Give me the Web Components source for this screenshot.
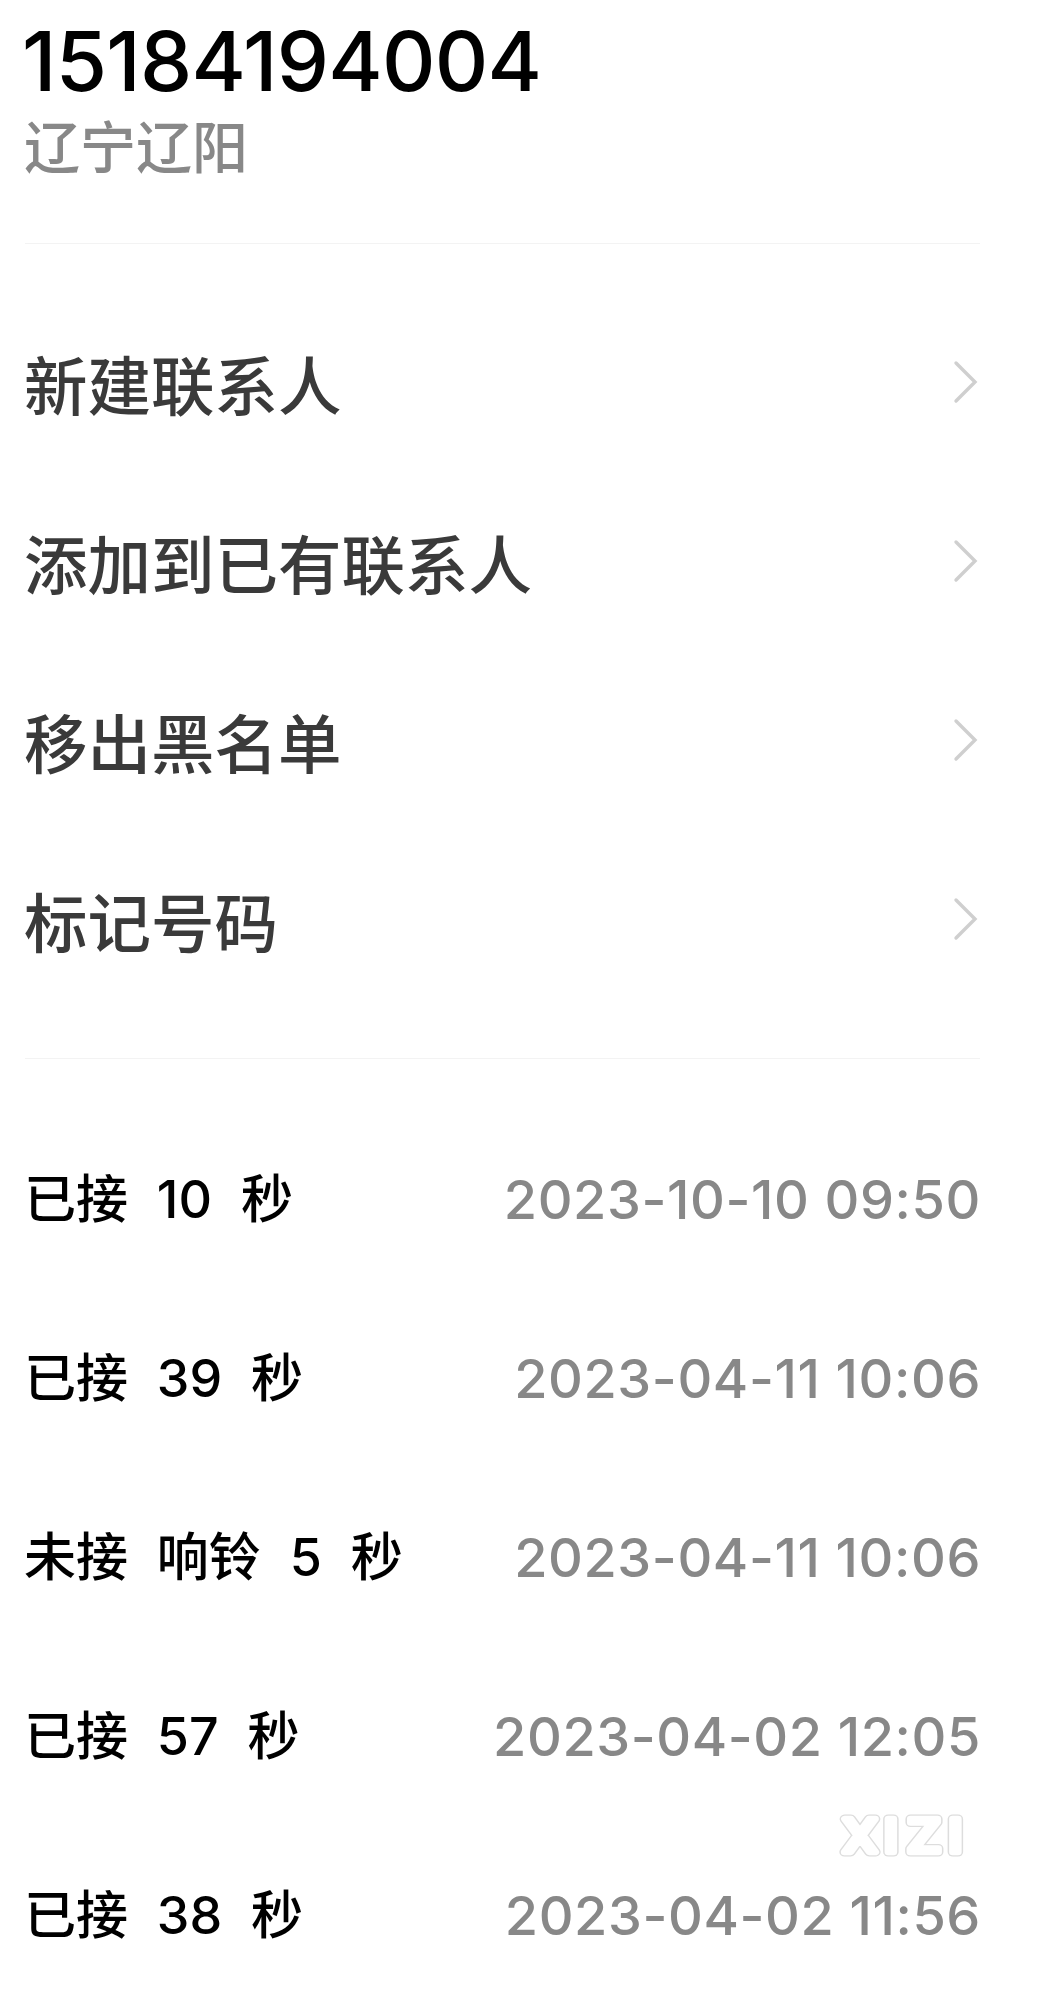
<!DOCTYPE html>
<html lang="zh">
<head>
<meta charset="utf-8">
<title>通话记录</title>
<style>
  html, body { margin: 0; background: #fff; }
  body {
    width: 1038px;
    height: 2000px;
    overflow: hidden;
    position: relative;
    font-family: Inter, "Noto Sans CJK SC", sans-serif;
  }
</style>
</head>
<body>
  <contact-header number="15184194004" region="辽宁辽阳"></contact-header>
  <section-list>
    <action-row>新建联系人</action-row>
    <action-row>添加到已有联系人</action-row>
    <action-row>移出黑名单</action-row>
    <action-row>标记号码</action-row>
  </section-list>
  <section-list last>
    <call-row time="2023-10-10 09:50">已接 10 秒</call-row>
    <call-row time="2023-04-11 10:06">已接 39 秒</call-row>
    <call-row time="2023-04-11 10:06">未接 响铃 5 秒</call-row>
    <call-row time="2023-04-02 12:05">已接 57 秒</call-row>
    <call-row time="2023-04-02 11:56">已接 38 秒</call-row>
  </section-list>
  <xizi-mark></xizi-mark>

<script>
class ContactHeader extends HTMLElement {
  constructor() {
    super();
    this.attachShadow({ mode: 'open' });
    this.shadowRoot.innerHTML = `
      <style>
        :host { display: block; height: 243px; padding: 0 58px 0 25px; }
        .number {
          font-size: 83px;
          line-height: 94px;
          font-weight: 500;
          letter-spacing: -0.75px;
          color: #000;
          padding-top: 14px;
          margin-left: -3px;
        }
        .region {
          font-size: 56px;
          line-height: 68px;
          font-weight: 500;
          color: #888;
          margin-left: -1px;
          padding-top: 6px;
        }
      </style>
      <div class="number">${this.getAttribute('number')}</div>
      <div class="region">${this.getAttribute('region')}</div>
    `;
  }
}

class SectionList extends HTMLElement {
  constructor() {
    super();
    this.attachShadow({ mode: 'open' });
    this.shadowRoot.innerHTML = `
      <style>
        :host { display: block; margin: 0 58px 0 25px; border-top: 1px solid #f3f3f3; padding: 51px 0 47px; }
        :host([last]) { padding-bottom: 0; }
      </style>
      <slot></slot>
    `;
  }
}

class ActionRow extends HTMLElement {
  constructor() {
    super();
    this.attachShadow({ mode: 'open' });
    this.shadowRoot.innerHTML = `
      <style>
        :host {
          display: flex;
          align-items: center;
          justify-content: space-between;
          height: 179px;
          font-size: 63.5px;
          font-weight: 500;
          color: #3a3a3a;
        }
        .text { margin-top: -6px; margin-left: -1px; }
        svg { display: block; width: 26px; height: 44px; margin-top: -6px; margin-right: 1px; }
      </style>
      <div class="text"><slot></slot></div>
      <svg viewBox="0 0 26 44" fill="none" stroke="#cfcfcf" stroke-width="3.4" stroke-linecap="round" stroke-linejoin="miter">
        <path d="M3 3 L22 22 L3 41"/>
      </svg>
    `;
  }
}

class CallRow extends HTMLElement {
  constructor() {
    super();
    this.attachShadow({ mode: 'open' });
    this.shadowRoot.innerHTML = `
      <style>
        :host {
          display: flex;
          align-items: center;
          justify-content: space-between;
          height: 179px;
        }
        .label { font-size: 52px; font-weight: 500; color: #000; word-spacing: 15px; white-space: pre; margin-top: -8px; margin-left: -1px; }
        .time { font-size: 54px; color: #888; font-weight: 500; letter-spacing: 0.6px; margin-right: -1px; }
      </style>
      <div class="label"><slot></slot></div>
      <div class="time">${this.getAttribute('time')}</div>
    `;
  }
}

// watermark: real text, a grey rounded stroke with a white one on top leaves the outline
class XiziMark extends HTMLElement {
  constructor() {
    super();
    this.attachShadow({ mode: 'open' });
    this.shadowRoot.innerHTML = `
      <style>
        :host { position: absolute; left: 838px; top: 1814px; width: 124px; height: 43px; }
        svg { display: block; overflow: visible; }
        text { font: 400 47px Roboto, sans-serif; text-anchor: middle; }
        g { stroke-linejoin: round; stroke-linecap: round; }
      </style>
      <svg width="124" height="43" viewBox="0 0 124 43">
        <g transform="scale(1.15 1)">
          <g fill="#ddd" stroke="#ddd" stroke-width="9"><use href="#mark"/></g>
          <g fill="#fff" stroke="#fff" stroke-width="6.4">
            <text id="mark" x="19 46 75 102" y="38">XIZI</text>
          </g>
        </g>
      </svg>
    `;
  }
}

customElements.define('contact-header', ContactHeader);
customElements.define('section-list', SectionList);
customElements.define('action-row', ActionRow);
customElements.define('call-row', CallRow);
customElements.define('xizi-mark', XiziMark);
</script>
</body>
</html>
